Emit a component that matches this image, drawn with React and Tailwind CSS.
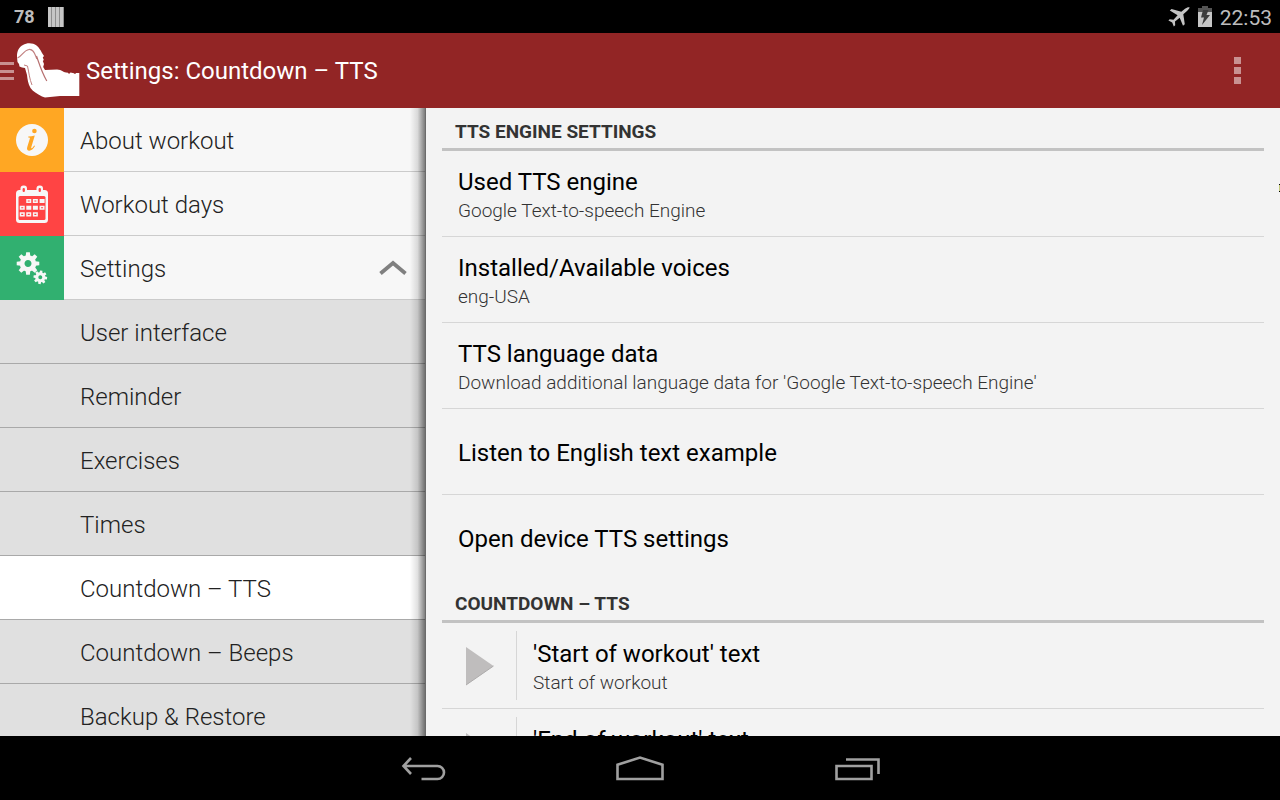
import React, { useState } from 'react';

const subItems = [
  'User interface',
  'Reminder',
  'Exercises',
  'Times',
  'Countdown – TTS',
  'Countdown – Beeps',
  'Backup & Restore'
];

const enginePrefs = [
  { title: 'Used TTS engine', summary: 'Google Text-to-speech Engine' },
  { title: 'Installed/Available voices', summary: 'eng-USA' },
  { title: 'TTS language data', summary: "Download additional language data for 'Google Text-to-speech Engine'" },
  { title: 'Listen to English text example' },
  { title: 'Open device TTS settings' }
];

const countdownPrefs = [
  { title: "'Start of workout' text", summary: 'Start of workout' },
  { title: "'End of workout' text", summary: 'End of workout' }
];

// one gear = ring + 8 teeth
const Gear = ({ cx, cy, r, hole, tooth, turn = 0 }) => (
  <g transform={`translate(${cx} ${cy}) rotate(${turn})`}>
    <circle r={(r + hole) / 2} fill="none" stroke="#f7f7f7" strokeWidth={r - hole} />
    {[0, 45, 90, 135, 180, 225, 270, 315].map((a) => (
      <path
        key={a}
        transform={`rotate(${a})`}
        fill="#f7f7f7"
        d={`M${-tooth} ${-r + 1}L${-tooth * 0.8} ${-r * 1.36}H${tooth * 0.8}L${tooth} ${-r + 1}Z`}
      />
    ))}
  </g>
);

const InfoIcon = () => (
  <svg width="32" height="32" viewBox="0 0 32 32" aria-hidden="true">
    <circle cx="16" cy="16" r="16" fill="#f7f7f7" />
    <circle cx="18.4" cy="7" r="2.3" fill="#ffa723" />
    <path d="M12.3 12.6C14.4 12.5 16.6 12.2 18.8 11.6L15.2 23.6C15 24.5 15.6 24.6 16.3 23.9C17 23.3 17.6 22.5 18.2 21.6L19 22.1C17.2 25.2 15.4 26.7 13.3 26.7C11.4 26.7 10.6 25.3 11.2 23.3L13.8 14.8C14.2 13.6 13.7 13.4 12.2 13.4Z" fill="#ffa723" />
  </svg>
);

const CalendarIcon = () => (
  <svg width="32" height="38" viewBox="0 0 32 38" aria-hidden="true">
    <rect x="0" y="5" width="32" height="33" rx="3.5" fill="#f7f7f7" />
    <rect x="4.5" y="0.5" width="6.5" height="8" rx="3" fill="#f7f7f7" />
    <rect x="20.5" y="0.5" width="6.5" height="8" rx="3" fill="#f7f7f7" />
    <rect x="6.6" y="3" width="2.3" height="4" rx="1" fill="#ff4444" />
    <rect x="22.6" y="3" width="2.3" height="4" rx="1" fill="#ff4444" />
    <rect x="2.5" y="11" width="27" height="24" rx="1.5" fill="#ff4444" />
    <g fill="none" stroke="#f7f7f7" strokeWidth="1.5">
      <path d="M11 14.7h3.5v2.6H11zM17.6 14.7h3.5v2.6h-3.5zM4.5 21.4H8V24H4.5zM24.3 21.4h3.5V24h-3.5zM4.5 28.1H8v2.6H4.5zM11 28.1h3.5v2.6H11zM17.6 28.1h3.5v2.6h-3.5z" />
    </g>
    <path d="M23.6 14h5v4h-5zM10.3 20.7h5v4h-5zM16.9 20.7h5v4h-5z" fill="#f7f7f7" />
  </svg>
);

const GearsIcon = () => (
  <svg width="32" height="34" viewBox="0 0 32 34" aria-hidden="true">
    <Gear cx={12} cy={12.5} r={8.3} hole={3.5} tooth={2.3} />
    <Gear cx={24.3} cy={26.3} r={5} hole={2} tooth={1.5} turn={8} />
  </svg>
);

const PushupLogo = () => (
  <svg width="64" height="56" viewBox="0 0 64 56" aria-hidden="true">
    <path
      d="M1 14C.8 8 3 4 7 2C11-.5 17-.2 20.500 2.500C23 4.500 24.500 7 26 10L28 13L26.800 14.500L27.800 17L26.800 18L28 21L27.200 24L29 27L41 26.500C46 27 47 29 50 29.500L52 29.800L53 31L54.500 29.600L58 30.200L59 31.200L60 30L63.300 30V53H44L29 54.500L26 53.500C21 50.500 17 48.500 14.500 45C12 41 11.500 36 11 32L9 25L6 24.500L3.500 23.500L3 21L1.500 19Z"
      fill="#fff"
    />
    <path d="M1.500 15C6 13 7.500 7.500 13 6.500C18 6 19 12 21 16" fill="none" stroke="#c28080" strokeWidth="1.200" />
    <path d="M20.500 13C23 20 25.500 29 30.800 38" fill="none" stroke="#b77070" strokeWidth="1.200" />
    <path d="M8 22L11.500 23C13 30 13.500 36 16 42" fill="none" stroke="#c28080" strokeWidth="1" />
  </svg>
);

const mainItems = [
  { label: 'About workout', tile: 'bg-[#ffa723]', icon: <InfoIcon /> },
  { label: 'Workout days', tile: 'bg-[#ff4444]', icon: <CalendarIcon /> },
  { label: 'Settings', tile: 'bg-[#31b070]', icon: <GearsIcon />, expandable: true }
];

function StatusBar() {
  return (
    <div className="flex h-[33px] shrink-0 items-center justify-between bg-black pl-[14px] pr-2 text-[#bdbdbd]">
      <div className="flex items-center gap-3">
        <span className="text-[18px] leading-6 font-bold">78</span>
        <svg width="18" height="20" viewBox="0 0 18 20" aria-hidden="true">
          <rect x="1" width="16" height="20" fill="#8d8d8d" />
          <path d="M1 0h3v20H1zM5 0h3v20H5zM9 0h3v20H9zM13 0h3v20h-3z" fill="#c6c6c6" />
        </svg>
      </div>
      <div className="flex items-center gap-2">
        <svg width="22" height="20" viewBox="0 0 22 20" aria-hidden="true">
          <path
            d="M21.500.3C20.500-.2 18.500.5 17 1.700L13.300 4.800L3.500 2L1.800 3.600L9.600 8.200L5.500 12.700L1.700 12.200L.4 13.500L4.200 15.400L5.800 19.400L7.200 18.200L7 14.600L11.700 10.800L15 18.800L16.800 17.200L15.300 7.300L19 4C20.500 2.700 21.800 1 21.500.3Z"
            fill="#c4c4c4"
          />
        </svg>
        <svg width="14" height="21" viewBox="0 0 14 21" aria-hidden="true">
          <path d="M4 0h6v2h4v5H0V2h4z" fill="#555" />
          <path d="M0 6h14v15H0z" fill="#c6c6c6" />
          <path d="M5 4h5.500L8.500 9H12L4 19L6 11.500H3Z" fill="#3c3c3c" />
        </svg>
        <span className="pt-[2px] text-[21px] leading-6">22:53</span>
      </div>
    </div>
  );
}

function ActionBar() {
  return (
    <header className="flex h-[75px] shrink-0 items-center bg-[#922525]">
      <button type="button" aria-label="Toggle navigation" className="flex items-center gap-[2px]">
        <svg width="14" height="20" viewBox="0 0 14 20" aria-hidden="true">
          <path d="M0 1h14v3H0zM0 9h14v3H0zM0 16h14v3H0z" fill="#c89191" />
        </svg>
        <PushupLogo />
      </button>
      <h1 className="flex-1 pl-[6px] text-[24px] leading-8 text-white">Settings: Countdown – TTS</h1>
      <button type="button" aria-label="More options" className="px-[39px]">
        <svg width="8" height="28" viewBox="0 0 8 28" aria-hidden="true">
          <path d="M1 0h7v7H1zM1 10h7v7H1zM1 20h7v7H1z" fill="#c99292" />
        </svg>
      </button>
    </header>
  );
}

function Drawer({ selected, onSelect }) {
  const [open, setOpen] = useState(true);

  return (
    <nav className="relative w-[426px] shrink-0 overflow-hidden text-[24px] leading-8 font-light text-[#222]">
      <ul>
        {mainItems.map((item) => (
          <li key={item.label}>
            <button
              type="button"
              className="flex h-16 w-full text-left"
              onClick={() => item.expandable && setOpen(!open)}
            >
              <span className={`flex h-16 w-16 shrink-0 items-center justify-center ${item.tile}`}>{item.icon}</span>
              <span className="flex h-16 flex-1 items-center justify-between border-b border-[#cbcbcb] bg-[#f7f7f7] pt-[2px] pr-[19px] pl-4">
                {item.label}
                {item.expandable && (
                  <svg width="28" height="18" viewBox="0 0 28 18" aria-hidden="true">
                    <path d="M1.500 13.500L14 3L26.500 13.500" fill="none" stroke="#808080" strokeWidth="3.800" />
                  </svg>
                )}
              </span>
            </button>
          </li>
        ))}
      </ul>
      {open && (
        <ul>
          {subItems.map((label) => (
            <li key={label}>
              <button
                type="button"
                onClick={() => onSelect(label)}
                className={`flex h-16 w-full items-center border-b border-[#a9a9a9] pt-[2px] pl-20 text-left ${
                  label === selected ? 'bg-white' : 'bg-[#e0e0e0]'
                }`}
              >
                {label}
              </button>
            </li>
          ))}
        </ul>
      )}
      {/* shadow cast by the content pane */}
      <div className="pointer-events-none absolute inset-y-0 right-0 w-4 border-r border-[#6b6b6b] bg-gradient-to-r from-black/0 via-black/12 to-black/50" />
    </nav>
  );
}

function SectionTitle({ children }) {
  return (
    <h2 className="flex h-[43px] items-center border-b-3 border-[#c2c2c2] pt-[7px] pl-[13px] text-[19px] leading-6 font-bold text-[#333]">
      {children}
    </h2>
  );
}

function Preference({ title, summary, playable }) {
  return (
    <li className="flex h-[86px] items-center border-b border-[#d6d6d6] last:h-[85px] last:border-b-0">
      {playable && (
        <button
          type="button"
          aria-label={`Play ${title}`}
          className="flex h-[69px] w-[75px] shrink-0 items-center border-r border-[#d6d6d6] pl-6"
        >
          <svg width="28" height="40" viewBox="0 0 28 40" aria-hidden="true">
            <path d="M0 1L27.500 20L0 39Z" fill="#bfbdbd" />
            <path d="M27.500 20L0 39" stroke="#adabab" strokeWidth="1" />
          </svg>
        </button>
      )}
      <button type="button" className="flex-1 pt-[2px] pl-4 text-left">
        <span className="block text-[24px] leading-8 text-black">{title}</span>
        {summary && <span className="block text-[19px] leading-[26px] font-light text-[#333]">{summary}</span>}
      </button>
    </li>
  );
}

function NavBar() {
  return (
    <footer className="flex h-16 shrink-0 items-center justify-center bg-black pt-1">
      <div className="flex w-[480px] justify-between">
        <button type="button" aria-label="Back" className="w-12">
          <svg width="48" height="28" viewBox="0 0 48 28" fill="none" stroke="#a0a0a0" strokeWidth="2.600" aria-hidden="true">
            <path d="M11 2L3.500 10L11 18M3.500 10H37.500A6.500 6.500 0 0 1 37.500 23H21.500" />
          </svg>
        </button>
        <button type="button" aria-label="Home" className="w-12">
          <svg width="48" height="28" viewBox="0 0 48 28" fill="none" stroke="#a0a0a0" strokeWidth="2.600" aria-hidden="true">
            <path d="M1.500 23V8.800L24 1.500L46.500 8.800V23Z" />
          </svg>
        </button>
        <button type="button" aria-label="Recent apps" className="w-12">
          <svg width="48" height="28" viewBox="0 0 48 28" fill="none" stroke="#a0a0a0" strokeWidth="2.600" aria-hidden="true">
            <path d="M4.500 10H39.500V23H4.500ZM14 3.500H46.500V18" />
          </svg>
        </button>
      </div>
    </footer>
  );
}

export default function App() {
  const [selected, setSelected] = useState('Countdown – TTS');

  return (
    <div className="relative flex h-screen flex-col overflow-hidden bg-black font-['Roboto',sans-serif]">
      <StatusBar />
      <ActionBar />
      <div className="flex min-h-0 flex-1 bg-[#f3f3f3]">
        <Drawer selected={selected} onSelect={setSelected} />
        <main className="min-w-0 flex-1 overflow-hidden px-4">
          <section>
            <SectionTitle>TTS ENGINE SETTINGS</SectionTitle>
            <ul>
              {enginePrefs.map((pref) => (
                <Preference key={pref.title} {...pref} />
              ))}
            </ul>
          </section>
          <section>
            <SectionTitle>COUNTDOWN – TTS</SectionTitle>
            <ul>
              {countdownPrefs.map((pref) => (
                <Preference key={pref.title} {...pref} playable />
              ))}
            </ul>
          </section>
        </main>
      </div>
      <NavBar />
      {/* pull handle peeking in from the right edge */}
      <div className="absolute top-[184px] right-0 h-2 w-px border-y border-black bg-[#c5cc7a]" />
    </div>
  );
}
